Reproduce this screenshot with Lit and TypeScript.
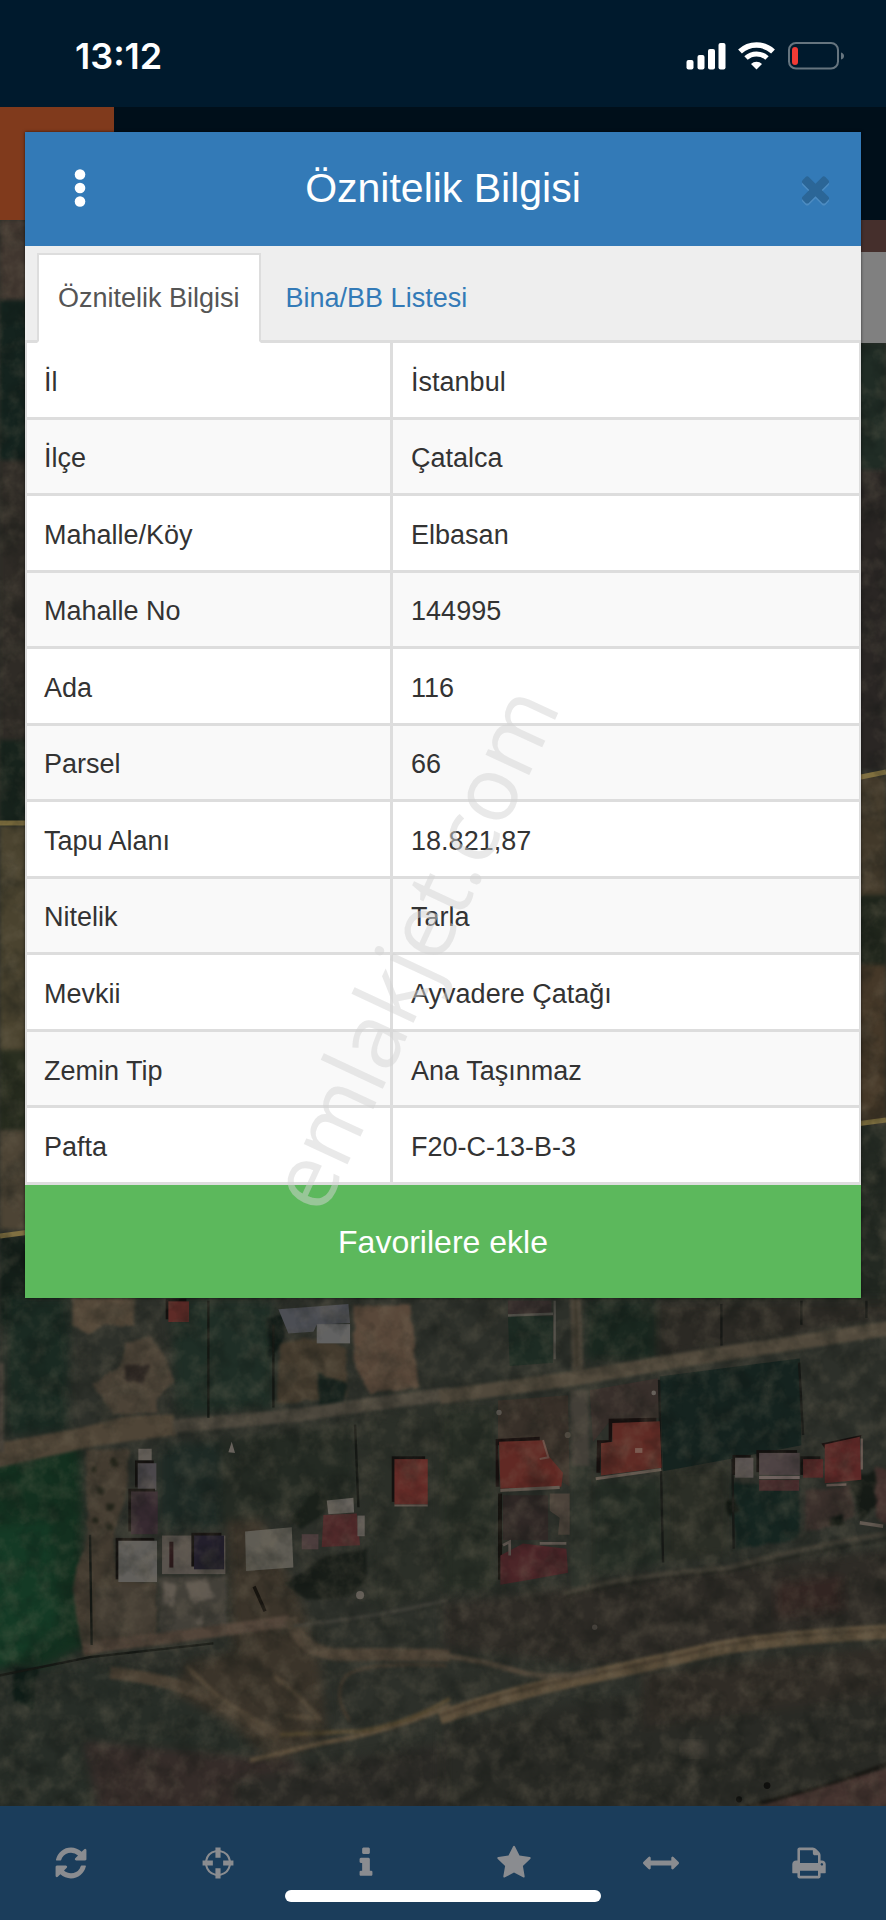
import { LitElement, html, css, svg } from "lit";
import { customElement, property, state } from "lit/decorators.js";

const icons: Record<string, string> = {
  refresh:
    "M1639 1056q0 5-1 7-64 268-268 434.5t-478 166.5q-146 0-282.5-55t-243.5-157l-129 129q-19 19-45 19t-45-19-19-45v-448q0-26 19-45t45-19h448q26 0 45 19t19 45-19 45l-137 137q71 66 161 102t187 36q134 0 250-65t186-179q11-17 53-117 8-23 30-23h192q13 0 22.5 9.5t9.5 22.5zm25-800v448q0 26-19 45t-45 19h-448q-26 0-45-19t-19-45 19-45l138-138q-148-137-349-137-134 0-250 65t-186 179q-11 17-53 117-8 23-30 23h-199q-13 0-22.5-9.5t-9.5-22.5v-7q65-268 270-434.5t480-166.5q146 0 284 55.5t245 156.5l130-129q19-19 45-19t45 19 19 45z",
  target:
    "M768 128h256v130a650 650 0 0 1 510 510h130v256h-130a650 650 0 0 1-510 510v130h-256v-130a650 650 0 0 1-510-510h-130v-256h130a650 650 0 0 1 510-510zm0 234a545 545 0 0 0-406 406h278v256h-278a545 545 0 0 0 406 406v-278h256v278a545 545 0 0 0 406-406h-278v-256h278a545 545 0 0 0-406-406v278h-256z",
  info: "M1216 1344v128q0 26-19 45t-45 19h-512q-26 0-45-19t-19-45v-128q0-26 19-45t45-19h64v-384h-64q-26 0-45-19t-19-45v-128q0-26 19-45t45-19h384q26 0 45 19t19 45v576h64q26 0 45 19t19 45zm-128-1152v192q0 26-19 45t-45 19h-256q-26 0-45-19t-19-45v-192q0-26 19-45t45-19h256q26 0 45 19t19 45z",
  star: "M1728 647q0 22-26 48l-363 354 86 500q1 7 1 20 0 21-10.5 35.5t-30.5 14.5q-19 0-40-12l-449-236-449 236q-22 12-40 12-21 0-31.5-14.5t-10.5-35.5q0-6 2-20l86-500-364-354q-25-27-25-48 0-37 56-46l502-73 225-455q19-41 49-41t49 41l225 455 502 73q56 9 56 46z",
  measure:
    "M1792 896q0 26-19 45l-256 256q-19 19-45 19t-45-19-19-45v-128h-1024v128q0 26-19 45t-45 19-45-19l-256-256q-19-19-19-45t19-45l256-256q19-19 45-19t45 19 19 45v128h1024v-128q0-26 19-45t45-19 45 19l256 256q19 19 19 45z",
  print:
    "M448 1536h896v-256h-896v256zm0-640h896v-384h-160q-40 0-68-28t-28-68v-160h-640v640zm1152 64q0-26-19-45t-45-19-45 19-19 45 19 45 45 19 45-19 19-45zm128 0v416q0 13-9.5 22.5t-22.5 9.5h-224v160q0 40-28 68t-68 28h-960q-40 0-68-28t-28-68v-160h-224q-13 0-22.5-9.5t-9.5-22.5v-416q0-79 56.5-135.5t135.5-56.5h64v-544q0-40 28-68t68-28h672q40 0 88 20t76 48l152 152q28 28 48 76t20 88v256h64q79 0 135.5 56.5t56.5 135.5z",
  close:
    "M1490 1322q0 40-28 68l-136 136q-28 28-68 28t-68-28l-294-294-294 294q-28 28-68 28t-68-28l-136-136q-28-28-28-68t28-68l294-294-294-294q-28-28-28-68t28-68l136-136q28-28 68-28t68 28l294 294 294-294q28-28 68-28t68 28l136 136q28 28 28 68t-28 68l-294 294 294 294q28 28 28 68z",
};

@customElement("fa-icon")
class FaIcon extends LitElement {
  @property() name = "";
  static styles = css`
    :host {
      display: block;
      width: 36px;
      height: 36px;
    }
    svg {
      display: block;
      width: 100%;
      height: 100%;
      fill: currentColor;
      overflow: visible;
    }
  `;
  render() {
    return html`<svg viewBox="0 0 1792 1792" aria-hidden="true">
      <path d=${icons[this.name]} fill-rule="evenodd" />
    </svg>`;
  }
}

@customElement("status-bar")
class StatusBar extends LitElement {
  static styles = css`
    :host {
      display: flex;
      justify-content: space-between;
      align-items: center;
      box-sizing: border-box;
      height: 107px;
      padding: 5px 40px 0 75px;
      background: #001a2d;
      color: #fff;
    }
    .time {
      font: 600 36px/42px Inter, sans-serif;
    }
    svg {
      display: block;
      width: 160px;
      height: 30px;
    }
  `;
  render() {
    return html`
      <span class="time">13:12</span>
      <svg viewBox="0 0 160 30" aria-hidden="true">
        <g fill="#fff">
          <rect x="0.500" y="19" width="7" height="9.500" rx="2" />
          <rect x="11.500" y="14" width="7" height="14.500" rx="2" />
          <rect x="22" y="8" width="7" height="20.500" rx="2" />
          <rect x="32.500" y="2" width="7" height="26.500" rx="2" />
          <path d="M70.500 28.500l-5.500-5.500a8 8 0 0 1 11 0z" />
        </g>
        <g fill="none" stroke="#fff">
          <path d="M54 10.600a24 24 0 0 1 33 0" stroke-width="5.500" />
          <path d="M60 17a15.500 15.500 0 0 1 21 0" stroke-width="5" />
        </g>
        <rect x="103" y="2" width="49" height="25.500" rx="7" fill="none" stroke="#66757f" stroke-width="2" />
        <rect x="106" y="6" width="6" height="18" rx="3" fill="#f23b35" />
        <path d="M155 11.500q3 1 3 3.500t-3 3.500z" fill="#66757f" />
      </svg>
    `;
  }
}

const roof = (x: number, y: number, w: number, h: number, fill: string) => svg`
  <rect x=${x - 8} y=${y - 8} width=${w} height=${h} fill="#14110f" />
  <rect x=${x} y=${y} width=${w} height=${h} fill=${fill} />`;

@customElement("aerial-map")
class AerialMap extends LitElement {
  static styles = css`
    :host {
      display: block;
      position: relative;
      background: #2b2e28;
      overflow: hidden;
    }
    svg {
      position: absolute;
      inset: 0;
      width: 100%;
      height: 100%;
    }
    filter {
      color-interpolation-filters: sRGB;
    }
  `;
  render() {
    return html`<svg viewBox="0 220 886 1586" preserveAspectRatio="xMidYMin slice" role="img" aria-label="Uydu haritası">
      <defs>
        <filter id="soft" x="-10%" y="-10%" width="120%" height="120%"><feGaussianBlur stdDeviation="14" /></filter>
        <filter id="edge" x="-5%" y="-5%" width="110%" height="110%">
          <feTurbulence type="fractalNoise" baseFrequency="0.02" numOctaves="3" seed="4" result="n" />
          <feDisplacementMap in="SourceGraphic" in2="n" scale="18" xChannelSelector="R" yChannelSelector="G" />
          <feGaussianBlur stdDeviation="4" />
        </filter>
        <filter id="line" x="-5%" y="-5%" width="110%" height="110%"><feGaussianBlur stdDeviation="4" /></filter>
        <filter id="fine" x="-5%" y="-5%" width="110%" height="110%"><feGaussianBlur stdDeviation="2" /></filter>
        <filter id="grain" x="0" y="0" width="100%" height="100%">
          <feTurbulence type="fractalNoise" baseFrequency="0.05" numOctaves="4" seed="9" />
          <feColorMatrix values="0 0 0 0 0.5  0 0 0 0 0.46  0 0 0 0 0.38  1.2 0 0 0 -0.5" />
        </filter>
        <filter id="shade" x="0" y="0" width="100%" height="100%">
          <feTurbulence type="fractalNoise" baseFrequency="0.04" numOctaves="4" seed="21" />
          <feColorMatrix values="0 0 0 0 0.05  0 0 0 0 0.07  0 0 0 0 0.06  1.6 0 0 0 -0.7" />
        </filter>
      </defs>
      <rect y="220" width="886" height="1586" fill="#2d302a" />

      <g filter="url(#fine)">
        <rect y="220" width="30" height="90" fill="#40362f" />
        <rect y="300" width="30" height="170" fill="#14231e" />
        <rect y="460" width="30" height="330" fill="#2f2b26" />
        <rect y="740" width="30" height="84" fill="#17231c" />
        <rect y="826" width="30" height="230" fill="#4a432f" />
        <rect y="1050" width="30" height="90" fill="#2a2f20" />
        <rect y="1130" width="30" height="100" fill="#4d4435" />
        <rect y="1236" width="30" height="90" fill="#141f19" />
        <rect x="856" y="343" width="30" height="130" fill="#202c25" />
        <rect x="856" y="470" width="30" height="300" fill="#2a2624" />
        <rect x="856" y="776" width="30" height="150" fill="#42392a" />
        <rect x="856" y="895" width="30" height="75" fill="#20261c" />
        <rect x="856" y="965" width="30" height="158" fill="#453828" />
        <rect x="856" y="1125" width="30" height="180" fill="#232922" />
      </g>
      <g stroke="#80703f" stroke-width="5">
        <path d="M0 823h30M0 1236l30-4M856 778l30-6M856 1124l30-4" />
      </g>

      <g transform="translate(0 1280) scale(.3334 .3444)">
        <g filter="url(#soft)">
          <path d="M-30 540L240 480 260 1060 60 1160-30 1300z" fill="#13301f" />
          <path d="M-30 720L150 700 180 1050-30 1130z" fill="#143a25" />
          <path d="M20 50L210 50 200 440 20 450z" fill="#1a2a22" />
          <path d="M510 60L820 60 820 370 530 390z" fill="#1f2e26" />
          <path d="M480 480L1060 420 1070 640 680 710 480 730z" fill="#242a23" />
          <path d="M480 480L660 470 660 720 480 730z" fill="#1e2a25" />
          <path d="M1080 400L1360 360 1360 900 1110 960z" fill="#2b2f28" />
          <path d="M-30 1130L300 1110 700 1260 760 1380 400 1530-30 1560z" fill="#272d27" />
          <path d="M250 1340L900 1400 900 1560 300 1560z" fill="#352c29" />
          <path d="M700 1450L1360 1340 1360 1560 700 1560z" fill="#2b2a26" />
          <path d="M680 700L780 690 900 930 960 1120 980 1330 820 1400 680 1280 520 1200 560 1110 700 1080z" fill="#3b342a" />
        </g>
        <g filter="url(#edge)">
          <path d="M215 50H405L400 135 330 130 260 155 215 130z" fill="#55493a" />
          <path d="M380 180L450 165 500 230 520 300 470 340 470 385 340 390 280 300 350 260 370 215z" fill="#4c4337" />
          <path d="M370 245L450 245 430 300 375 290z" fill="#2b2521" />
          <path d="M1060 75L1230 70 1255 310 1110 330 1060 250z" fill="#59483a" />
          <path d="M840 180L950 170 1040 200 1040 340 830 360z" fill="#443b2e" />
          <path d="M255 495L390 490 380 620 340 740 350 870 470 880 470 1040 250 1090 215 900 265 740z" fill="#433b30" />
          <path d="M285 890H470V1035H285z" fill="#453e34" />
          <path d="M475 860H680V1010L480 1030z" fill="#434039" />
          <path d="M490 870l40 20-10 60-30-10zM560 880l60-10 20 50-60 20zM590 980l20-10v30h-20z" fill="#615a51" />
          <path d="M40 1120L110 1130 100 1250 40 1220z" fill="#0f1c17" />
          <path d="M800 110L850 100 850 180 810 230z" fill="#101a16" />
          <path d="M950 270L1040 300 1030 370 960 370z" fill="#17221d" />
          <path d="M980 800L1100 780 1100 880 1050 920 920 930 860 880z" fill="#191e19" />
          <path d="M870 700L950 600 990 640 960 690 900 720z" fill="#1a201a" />
          <path d="M270 540h18v18h-18zM330 520h22v22h-22zM290 600h20v20h-20zM320 650h24v20h-24zM275 690h20v16h-20zM320 710h20v18h-20z" fill="#222319" />
        </g>
        <g filter="url(#line)" fill="none">
          <path d="M-10 475L240 430 380 395 520 390 530 450 300 480-10 545z" fill="#4f4537" />
          <path d="M520 425L900 392 1100 362 1350 330" stroke="#4c473d" stroke-width="38" />
          <path d="M-5 240L12 240 12 500-5 500z" fill="#454038" />
          <path d="M250 1068L500 1040 720 1010 870 990" stroke="#53453a" stroke-width="34" />
          <path d="M870 980Q900 1090 1040 1088T1350 1090" stroke="#4f4437" stroke-width="36" />
          <path d="M1340 1120Q1060 1105 1030 1160T1050 1280" stroke="#40382d" stroke-width="10" />
          <path d="M330 1140Q520 1160 620 1210T840 1330" stroke="#4a4033" stroke-width="36" />
          <path d="M560 1120Q660 1230 800 1300M850 1265L960 1272M820 1150Q900 1200 960 1280" stroke="#4f4435" stroke-width="14" />
          <path d="M750 1395L960 1345Q1180 1310 1350 1235" stroke="#5c4e3b" stroke-width="14" />
          <path d="M840 1320L1080 1310Q1220 1290 1350 1215" stroke="#52462f" stroke-width="12" />
          <path d="M880 1004Q1120 980 1340 930" stroke="#42413a" stroke-width="8" />
        </g>
        <g filter="url(#fine)">
          <path d="M-10 1150L270 1095 640 1055M270 740L275 1060M1065 420L1075 660M820 130V370M625 60V400" fill="none" stroke="#151814" stroke-width="7" />
          ${roof(505, 62, 62, 60, "#5e2b27")}
          <path d="M835 85L1045 70 1050 125 950 130 940 150 865 155z" fill="#4c4e54" />
          <rect x="950" y="128" width="100" height="56" fill="#626262" />
          <rect x="415" y="490" width="40" height="34" fill="#625d57" />
          ${roof(413, 532, 56, 78, "#4b474b")}
          ${roof(393, 614, 80, 124, "#372a31")}
          ${roof(355, 757, 116, 120, "#615f5b")}
          <rect x="486" y="742" width="190" height="112" fill="#59534d" />
          <rect x="508" y="760" width="12" height="75" fill="#2c1a1b" />
          ${roof(582, 742, 90, 98, "#231f2c")}
          <path d="M735 730L875 718 880 835 738 845z" fill="#5f5c54" />
          <path d="M980 640L1060 632 1062 675 985 680z" fill="#68645f" />
          <path d="M970 682L1070 678 1080 770 965 775z" fill="#50292a" />
          <rect x="1072" y="684" width="22" height="60" fill="#625d58" />
          <rect x="905" y="738" width="50" height="44" fill="#4c3d3d" />
          ${roof(1183, 520, 100, 132, "#642b27")}
          <path d="M1183 655H1283" stroke="#655b53" stroke-width="6" />
          <circle cx="1080" cy="915" r="12" fill="#625d57" />
          <path d="M762 890L795 962" stroke="#17140f" stroke-width="10" />
          <path d="M685 500L695 470 705 502z" fill="#6b655f" />
        </g>
      </g>

      <g transform="translate(443 1280) scale(.3334 .3444)">
        <g filter="url(#soft)">
          <path d="M430 60H640V230H430z" fill="#19271f" />
          <path d="M640 60H1360V110L640 230z" fill="#2b2924" />
          <path d="M0 370H160V900H0z" fill="#272d25" />
          <path d="M450 580H660V820L450 860z" fill="#252d25" />
          <path d="M665 540L860 540 860 800 665 820z" fill="#2b2e26" />
          <path d="M0 940L1350 780 1350 1000 500 1120 0 1070z" fill="#2e2b26" />
          <path d="M1000 880L1200 860 1200 960 1000 980z" fill="#322522" />
          <path d="M0 1300L1350 1080 1350 1560 0 1560z" fill="#292a25" />
          <path d="M600 1140L1350 1060 1350 1200 600 1300z" fill="#302c26" />
        </g>
        <g filter="url(#fine)">
          <path d="M650 280L1070 228 1075 480 860 520 660 555z" fill="#15231f" />
          <path d="M195 105H330V240L200 250z" fill="#1d2b23" />
          <path d="M165 350L375 335 380 600 165 470z" fill="#383029" />
          <path d="M440 320L645 285 650 400 500 410 450 470z" fill="#382f2b" />
        </g>
        <g filter="url(#line)" fill="none">
          <path d="M408 320L412 560" stroke="#433f38" stroke-width="54" />
          <path d="M412 540L412 900" stroke="#30352d" stroke-width="60" />
          <path d="M398 50L405 300" stroke="#494338" stroke-width="34" />
          <path d="M398 50L402 250" stroke="#353126" stroke-width="6" />
          <path d="M-10 340L400 285Q720 230 900 205T1350 138" stroke="#51493c" stroke-width="42" />
          <path d="M360 910Q560 855 860 835 1100 770 1340 735" stroke="#403d34" stroke-width="14" />
          <path d="M370 918Q560 870 860 846 1100 790 1340 752" stroke="#1d1e19" stroke-width="4" />
          <path d="M-10 1270Q200 1200 420 1155T800 1075 1350 1020" stroke="#5e503c" stroke-width="42" />
          <path d="M-10 1265Q200 1192 420 1150T800 1070 1350 1014" stroke="#463b2d" stroke-width="7" />
          <path d="M-10 1088Q120 1105 220 1135T460 1135" stroke="#51473a" stroke-width="16" />
          <path d="M910 1530L1150 1470 1350 1400" stroke="#171612" stroke-width="12" />
          <path d="M940 1530L1340 1415V1530z" fill="#44332f" />
        </g>
        <g filter="url(#edge)">
          <path d="M860 590L1070 600 1065 750 880 785z" fill="#152520" />
          <path d="M1085 610L1220 600 1230 690 1140 720 1085 730z" fill="#3b302c" />
          <path d="M1215 580L1290 550 1310 650 1250 700z" fill="#161b16" />
          <path d="M1295 540L1350 560V710L1300 690z" fill="#43302d" />
          <path d="M845 640l30-10 15 40-30 20zM1160 690l40-10v30h-40z" fill="#121712" />
        </g>
        <g filter="url(#fine)">
          <path d="M648 290L660 820M835 70V190M1075 60V130M1270 60V110M1068 240L1080 450M868 520L872 780" fill="none" stroke="#171916" stroke-width="7" />
          <rect x="195" y="60" width="130" height="40" fill="#332b2a" />
          <path d="M195 103L330 98M335 60V230" fill="none" stroke="#504e48" stroke-width="7" />
          <path d="M158 462L290 455 290 480 165 480 170 600 158 600z" fill="#170f0e" />
          <path d="M168 470L298 465 320 515 360 560 355 600 172 606z" fill="#612924" />
          <path d="M172 611L350 602M458 577L655 550" fill="none" stroke="#655a51" stroke-width="9" />
          <path d="M300 465L316 515 290 520" fill="none" stroke="#6e5048" stroke-width="6" />
          <path d="M497 403L640 400 640 416 508 416 506 472 474 474 472 560 460 560 462 465 497 465z" fill="#170f0e" />
          <path d="M508 415L650 410 656 545 474 568 474 474 508 470z" fill="#602b25" />
          <rect x="576" y="488" width="22" height="14" fill="#7a5a50" />
          <rect x="165" y="620" width="12" height="250" fill="#15130f" />
          <rect x="180" y="625" width="135" height="130" fill="#302826" />
          <path d="M320 620H380V740H345L350 690 320 670z" fill="#4b423a" />
          <path d="M172 800L240 765 370 780 375 850 260 870 172 885z" fill="#4c2528" />
          <path d="M180 770L200 760 200 800M290 765H370" fill="none" stroke="#5f5650" stroke-width="8" />
          ${roof(876, 516, 55, 58, "#575150")}
          ${roof(948, 502, 122, 64, "#4e4344")}
          <path d="M948 573H1070" stroke="#6e615e" stroke-width="9" />
          <rect x="948" y="580" width="120" height="32" fill="#462a2b" />
          ${roof(1080, 520, 60, 54, "#552525")}
          <path d="M1135 475L1255 450 1250 470 1145 490z" fill="#170f0e" />
          <path d="M1145 478L1250 455 1255 580 1145 590z" fill="#5c2726" />
          <path d="M1150 596L1210 594M1256 460V550" fill="none" stroke="#6a5a54" stroke-width="7" />
          <path d="M1250 705L1320 715" stroke="#625951" stroke-width="10" />
          <circle cx="168" cy="385" r="8" fill="#67615b" />
          <circle cx="632" cy="328" r="7" fill="#67615b" />
          <circle cx="374" cy="450" r="9" fill="#5b5349" />
          <circle cx="455" cy="1008" r="8" fill="#504a44" />
          <circle cx="972" cy="1468" r="10" fill="#0f0f0d" />
          <circle cx="888" cy="1508" r="9" fill="#0f0f0d" />
        </g>
        <g filter="url(#soft)">
          <ellipse cx="752" cy="1362" rx="36" ry="22" fill="#4c473e" />
        </g>
      </g>

      <rect y="220" width="886" height="1586" filter="url(#grain)" opacity=".5" />
      <rect y="220" width="886" height="1586" filter="url(#shade)" opacity=".5" />
      <rect x="856" y="220" width="30" height="32" fill="#452f2c" />
      <rect x="856" y="252" width="30" height="91" fill="#808080" />
    </svg>`;
  }
}

@customElement("app-root")
class AppRoot extends LitElement {
  @state() tab = 0;

  private tabs = ["Öznitelik Bilgisi", "Bina/BB Listesi"];
  private rows = [
    ["İl", "İstanbul"],
    ["İlçe", "Çatalca"],
    ["Mahalle/Köy", "Elbasan"],
    ["Mahalle No", "144995"],
    ["Ada", "116"],
    ["Parsel", "66"],
    ["Tapu Alanı", "18.821,87"],
    ["Nitelik", "Tarla"],
    ["Mevkii", "Ayvadere Çatağı"],
    ["Zemin Tip", "Ana Taşınmaz"],
    ["Pafta", "F20-C-13-B-3"],
  ];
  private tools = [
    ["refresh", "Yenile"],
    ["target", "Konum"],
    ["info", "Bilgi"],
    ["star", "Favoriler"],
    ["measure", "Ölçüm"],
    ["print", "Yazdır"],
  ];

  static styles = css`
    :host {
      display: flex;
      flex-direction: column;
      position: relative;
      min-height: 100vh;
      font: 27px/36px "Liberation Sans", Arial, sans-serif;
      color: #333;
    }
    button {
      font: inherit;
      color: inherit;
      background: none;
      border: 0;
      padding: 0;
      margin: 0;
    }
    .topbar {
      height: 113px;
      background: #000f1a;
    }
    .brand {
      width: 114px;
      height: 113px;
      background: #803a1c;
    }
    aerial-map {
      flex: 1;
    }
    .toolbar {
      display: grid;
      grid-template-columns: repeat(6, 1fr);
      height: 114px;
      background: #1b3d5b;
      color: #8a8c90;
    }
    .toolbar button {
      display: grid;
      place-items: center;
      padding-right: 6px;
    }
    .home {
      position: absolute;
      left: 50%;
      bottom: 18px;
      width: 316px;
      height: 12px;
      margin-left: -158px;
      border-radius: 6px;
      background: #fff;
    }
    .dialog {
      position: absolute;
      top: 132px;
      left: 25px;
      right: 25px;
      background: #fff;
      box-shadow: 0 0 3px rgba(0, 0, 0, 0.6);
    }
    .head {
      display: grid;
      grid-template-columns: 110px 1fr 110px;
      align-items: center;
      box-sizing: border-box;
      height: 114px;
      padding-bottom: 2px;
      background: #337ab7;
      color: #fff;
    }
    .head h1 {
      margin: 0;
      font-size: 41px;
      line-height: 48px;
      font-weight: 400;
      text-align: center;
    }
    .head button {
      display: grid;
      place-items: center;
      height: 100%;
    }
    .dots {
      width: 12px;
      height: 40px;
      fill: #fff;
    }
    .close {
      justify-self: end;
      width: 92px;
    }
    .close fa-icon {
      width: 41px;
      height: 41px;
      color: #2b6697;
      filter: drop-shadow(0 2px 0 #4d8cc2);
    }
    .tabs {
      display: flex;
      gap: 4px;
      padding: 7px 12px 0;
      background: #eee;
      border-bottom: 3px solid #ddd;
    }
    .tab {
      margin-bottom: -3px;
      padding: 25px 19px;
      border: 2px solid transparent;
      color: #337ab7;
    }
    .tab.active {
      background: #fff;
      border-color: #ddd #ddd #fff;
      color: #555;
    }
    table {
      width: 100%;
      height: 842px;
      border: solid #ddd;
      border-width: 0 2px;
      border-spacing: 0;
      table-layout: fixed;
    }
    th,
    td {
      padding: 18px 18px 14px;
      border-bottom: 3px solid #ddd;
      font-weight: 400;
      text-align: left;
      vertical-align: middle;
    }
    th {
      width: 44%;
      box-sizing: border-box;
      padding-left: 17px;
      border-right: 3px solid #ddd;
    }
    tr:nth-child(even) {
      background: #f9f9f9;
    }
    .favorite {
      display: block;
      width: 100%;
      height: 113px;
      background: #5cb85c;
      color: #fff;
      font-size: 32px;
    }
    .watermark {
      position: absolute;
      left: 298px;
      top: 1005px;
      font: 90px/90px "Open Sans", sans-serif;
      color: rgba(212, 212, 212, 0.5);
      transform: rotate(-65deg);
      transform-origin: 0 80px;
      white-space: nowrap;
      pointer-events: none;
    }
  `;

  render() {
    return html`
      <status-bar></status-bar>
      <div class="topbar"><div class="brand"></div></div>
      <aerial-map></aerial-map>
      <nav class="toolbar">
        ${this.tools.map(
          ([name, label]) => html`<button aria-label=${label}><fa-icon name=${name}></fa-icon></button>`
        )}
      </nav>
      <div class="home"></div>

      <section class="dialog" role="dialog" aria-labelledby="title">
        <header class="head">
          <button aria-label="Menü">
            <svg class="dots" viewBox="0 0 12 40">
              <circle cx="6" cy="6.500" r="5.300" />
              <circle cx="6" cy="20" r="5.300" />
              <circle cx="6" cy="33.500" r="5.300" />
            </svg>
          </button>
          <h1 id="title">Öznitelik Bilgisi</h1>
          <button class="close" aria-label="Kapat"><fa-icon name="close"></fa-icon></button>
        </header>
        <div class="tabs" role="tablist">
          ${this.tabs.map(
            (label, i) => html`<button
              class="tab ${i === this.tab ? "active" : ""}"
              role="tab"
              aria-selected=${i === this.tab}
              @click=${() => (this.tab = i)}
            >
              ${label}
            </button>`
          )}
        </div>
        <table>
          <tbody>
            ${this.rows.map(([k, v]) => html`<tr><th scope="row">${k}</th><td>${v}</td></tr>`)}
          </tbody>
        </table>
        <button class="favorite">Favorilere ekle</button>
        <div class="watermark">emlakjet.com</div>
      </section>
    `;
  }
}
